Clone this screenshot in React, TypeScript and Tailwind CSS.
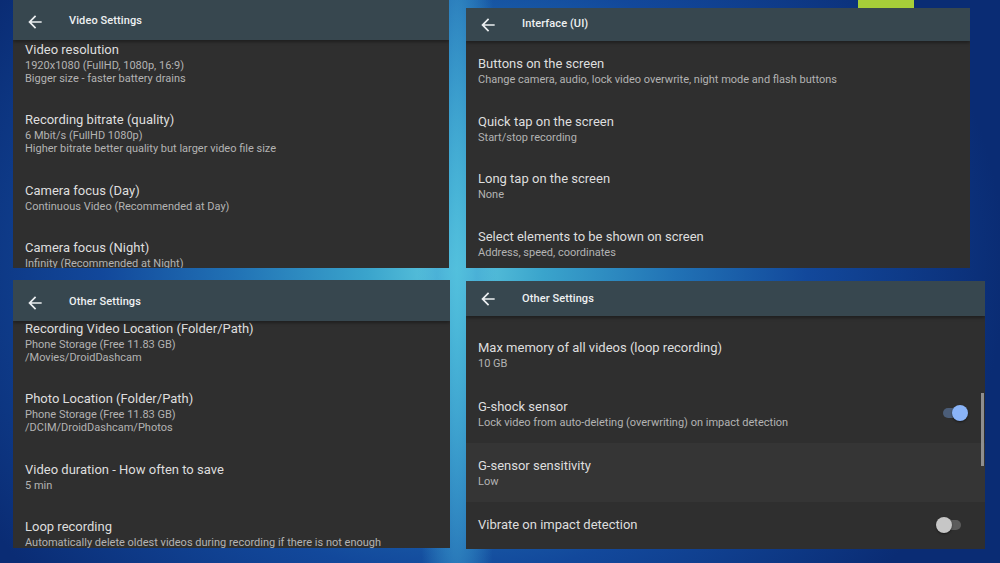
import React from 'react';

type Item = {
  title: string;
  lines?: string[];
  toggle?: 'on' | 'off';
  active?: boolean;
};

function BackArrow() {
  return (
    <svg viewBox="0 0 24 24" className="w-[20px] h-[20px] shrink-0" fill="#eceff1">
      <path d="M20 11H7.83l5.59-5.59L12 4l-8 8 8 8 1.41-1.41L7.83 13H20v-2z" />
    </svg>
  );
}

function Toggle({ on }: { on: boolean }) {
  return (
    <div className={`relative w-[28px] h-[16px] shrink-0 flex items-center justify-center ${on ? '' : 'mr-[4px]'}`}>
      <div className={`w-[22px] h-[10px] rounded-full ${on ? 'bg-[#4b5d78]' : 'bg-[#5c5c5c]'}`} />
      <div
        className={`absolute top-0 w-[16px] h-[16px] rounded-full shadow-[0_1px_2px_rgba(0,0,0,0.5)] ${
          on ? 'right-0 bg-[#8ab4f8]' : 'left-0 bg-[#c6c6c6]'
        }`}
      />
    </div>
  );
}

function Row({ item, pad }: { item: Item; pad: string }) {
  return (
    <div
      className={`flex items-center pl-[12px] pr-[17px] ${pad} ${item.active ? 'bg-[#353535]' : ''} ${
        item.lines ? '' : 'min-h-[45px]'
      }`}
    >
      <div className="flex-1 min-w-0">
        <div className="text-[13px] leading-[19px] text-[#dedede] whitespace-nowrap">{item.title}</div>
        {item.lines?.map((l, i) => (
          <div key={i} className="text-[11px] leading-[13px] text-[#b3b3b3] whitespace-nowrap">
            {l}
          </div>
        ))}
      </div>
      {item.toggle && <Toggle on={item.toggle === 'on'} />}
    </div>
  );
}

function Panel({
  title,
  items,
  className,
  headerClass,
  bodyClass,
  pad,
  scrollbar,
}: {
  title: string;
  items: Item[];
  className: string;
  headerClass: string;
  bodyClass: string;
  pad: string;
  scrollbar?: boolean;
}) {
  return (
    <div className={`relative flex flex-col bg-[#2f2f2f] overflow-hidden ${className}`}>
      <div
        className={`relative z-10 flex items-center gap-[24px] pl-[12px] bg-[#37474f] shadow-[0_2px_3px_rgba(0,0,0,0.35)] shrink-0 ${headerClass}`}
      >
        <BackArrow />
        <span className="text-[11px] font-medium text-[#eef1f2] tracking-[0.1px]">{title}</span>
      </div>
      <div className="flex-1 overflow-hidden">
        <div className={`flex flex-col ${bodyClass}`}>
          {items.map((it) => (
            <Row key={it.title} item={it} pad={pad} />
          ))}
        </div>
      </div>
      {scrollbar && <div className="absolute right-[1px] top-[112px] w-[3px] h-[73px] bg-[#8f8f8f]" />}
    </div>
  );
}

const videoItems: Item[] = [
  { title: 'Video resolution', lines: ['1920x1080 (FullHD, 1080p, 16:9)', 'Bigger size - faster battery drains'] },
  {
    title: 'Recording bitrate (quality)',
    lines: ['6 Mbit/s (FullHD 1080p)', 'Higher bitrate better quality but larger video file size'],
  },
  { title: 'Camera focus (Day)', lines: ['Continuous Video (Recommended at Day)'] },
  { title: 'Camera focus (Night)', lines: ['Infinity (Recommended at Night)'] },
];

const uiItems: Item[] = [
  { title: 'Buttons on the screen', lines: ['Change camera, audio, lock video overwrite, night mode and flash buttons'] },
  { title: 'Quick tap on the screen', lines: ['Start/stop recording'] },
  { title: 'Long tap on the screen', lines: ['None'] },
  { title: 'Select elements to be shown on screen', lines: ['Address, speed, coordinates'] },
];

const otherItems: Item[] = [
  {
    title: 'Recording Video Location (Folder/Path)',
    lines: ['Phone Storage (Free 11.83 GB)', '/Movies/DroidDashcam'],
  },
  { title: 'Photo Location (Folder/Path)', lines: ['Phone Storage (Free 11.83 GB)', '/DCIM/DroidDashcam/Photos'] },
  { title: 'Video duration - How often to save', lines: ['5 min'] },
  {
    title: 'Loop recording',
    lines: ['Automatically delete oldest videos during recording if there is not enough'],
  },
];

const sensorItems: Item[] = [
  { title: 'Max memory of all videos (loop recording)', lines: ['10 GB'] },
  {
    title: 'G-shock sensor',
    lines: ['Lock video from auto-deleting (overwriting) on impact detection'],
    toggle: 'on',
  },
  { title: 'G-sensor sensitivity', lines: ['Low'], active: true },
  { title: 'Vibrate on impact detection', toggle: 'off' },
];

export default function App() {
  return (
    <div
      className="w-[1000px] h-[563px] overflow-hidden flex bg-[radial-gradient(ellipse_4%_110%_at_45.7%_48%,rgba(80,190,220,0.85)_0%,rgba(60,160,210,0.5)_50%,rgba(40,120,190,0)_100%),radial-gradient(ellipse_55%_85%_at_45.5%_48%,#62cbe0_0%,#3aa4cc_16%,#2172b5_40%,#12489b_64%,#0a2c74_100%)]"
      style={{ fontFamily: 'Roboto, "Noto Sans", sans-serif' }}
    >
      <div className="flex flex-col pl-[13px] gap-[12px] w-[450px] shrink-0">
        <Panel
          title="Video Settings"
          items={videoItems}
          className="w-[436px] h-[268px]"
          headerClass="h-[40px] pt-[3px]"
          bodyClass="-mt-[13.5px]"
          pad="pt-[13px] pb-[12.5px]"
        />
        <Panel
          title="Other Settings"
          items={otherItems}
          className="w-[437px] h-[268px]"
          headerClass="h-[41px] pt-[4px]"
          bodyClass="-mt-[15.5px]"
          pad="pt-[13px] pb-[12.5px]"
        />
      </div>
      <div className="flex flex-col pl-[16px]">
        <div className="h-[8px] flex">
          <div className="ml-[392px] w-[56px] h-[8px] bg-[#a6ce39]" />
        </div>
        <Panel
          title="Interface (UI)"
          items={uiItems}
          className="w-[504px] h-[260px]"
          headerClass="h-[33px]"
          bodyClass="mt-0"
          pad="pt-[13px] pb-[12.5px]"
        />
        <div className="h-[13px]" />
        <Panel
          title="Other Settings"
          items={sensorItems}
          className="w-[519px] h-[268px]"
          headerClass="h-[35px] pt-[1px]"
          bodyClass="pt-[9px]"
          pad="pt-[13px] pb-[14px]"
          scrollbar
        />
      </div>
    </div>
  );
}
